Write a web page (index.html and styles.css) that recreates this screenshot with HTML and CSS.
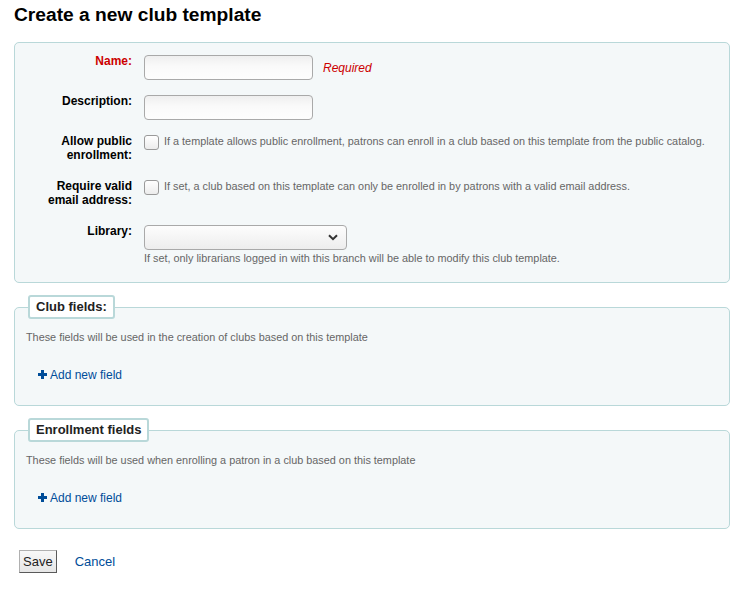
FILE: index.html
```html
<!DOCTYPE html>
<html lang="en">
<head>
<meta charset="utf-8">
<title>Create a new club template</title>
<link rel="stylesheet" href="styles.css">
</head>
<body>
<main class="page">
  <h1 class="title">Create a new club template</h1>
  <form class="form">
    <fieldset class="box box-main">
      <div class="row">
        <label class="lbl lbl-required" for="name">Name:</label>
        <div class="field field-center">
          <input class="text-input" id="name" type="text">
          <span class="required">Required</span>
        </div>
      </div>
      <div class="row">
        <label class="lbl" for="desc">Description:</label>
        <div class="field">
          <input class="text-input" id="desc" type="text">
        </div>
      </div>
      <div class="row row-tall">
        <label class="lbl" for="pub">Allow public enrollment:</label>
        <div class="field">
          <input class="check" id="pub" type="checkbox">
          <span class="hint hint-side">If a template allows public enrollment, patrons can enroll in a club based on this template from the public catalog.</span>
        </div>
      </div>
      <div class="row row-tall">
        <label class="lbl" for="email">Require valid email address:</label>
        <div class="field">
          <input class="check" id="email" type="checkbox">
          <span class="hint hint-side">If set, a club based on this template can only be enrolled in by patrons with a valid email address.</span>
        </div>
      </div>
      <div class="row row-last">
        <label class="lbl" for="lib">Library:</label>
        <div class="field field-column">
          <div class="select-wrap">
            <select class="select" id="lib"><option></option></select>
            <svg class="chevron" width="10" height="7" viewBox="0 0 10 7"><polyline points="1,1.2 5,5.2 9,1.2" fill="none" stroke="#333" stroke-width="2"/></svg>
          </div>
          <span class="hint hint-below">If set, only librarians logged in with this branch will be able to modify this club template.</span>
        </div>
      </div>
    </fieldset>

    <fieldset class="box box-sub">
      <legend class="legend">Club fields:</legend>
      <p class="hint intro">These fields will be used in the creation of clubs based on this template</p>
      <a class="add-link" href="#"><svg class="plus" width="9" height="9" viewBox="0 0 9 9"><rect x="3" y="0" width="3" height="9" fill="#004d99"/><rect x="0" y="3" width="9" height="3" fill="#004d99"/></svg>Add new field</a>
    </fieldset>

    <fieldset class="box box-sub">
      <legend class="legend">Enrollment fields</legend>
      <p class="hint intro">These fields will be used when enrolling a patron in a club based on this template</p>
      <a class="add-link" href="#"><svg class="plus" width="9" height="9" viewBox="0 0 9 9"><rect x="3" y="0" width="3" height="9" fill="#004d99"/><rect x="0" y="3" width="9" height="3" fill="#004d99"/></svg>Add new field</a>
    </fieldset>

    <div class="actions">
      <button class="save" type="button">Save</button>
      <a class="cancel" href="#">Cancel</a>
    </div>
  </form>
</main>
</body>
</html>
```

FILE: styles.css
```css
html, body {
  margin: 0;
  padding: 0;
  background: #fff;
}

body {
  font-family: "Liberation Sans", Arial, sans-serif;
  color: #000;
}

.page {
  padding: 0 0 0 14px;
  width: 716px;
}

.title {
  margin: 4px 0 0 0;
  font-size: 19.2px;
  line-height: 22px;
  font-weight: bold;
  color: #000;
}

.form {
  display: block;
}

.box {
  box-sizing: border-box;
  width: 716px;
  margin: 0;
  min-inline-size: 0;
  border: 1px solid #b9d8d9;
  border-radius: 5px;
  background: #f4f8f9;
}

.box-main {
  margin-top: 16px;
  padding: 11px 15px 17px 15px;
}

.box-sub {
  margin-top: 12px;
  padding: 0 11px 23px 11px;
}

.row {
  display: grid;
  grid-template-columns: 102px 1fr;
  column-gap: 12px;
  padding-bottom: 14px;
}

.row-tall {
  padding-bottom: 17px;
}

.row-last {
  padding-bottom: 0;
}

.lbl {
  font-size: 12px;
  line-height: 14px;
  font-weight: bold;
  text-align: right;
  color: #000;
}

.lbl-required {
  color: #cc0000;
}

.field {
  display: flex;
  align-items: flex-start;
}

.field-center {
  align-items: center;
}

.field-column {
  flex-direction: column;
}

.text-input {
  box-sizing: border-box;
  width: 169px;
  height: 25px;
  margin: 1px 0 0 0;
  padding: 2px 5px;
  border: 1px solid #a9a9a9;
  border-radius: 4px;
  background: linear-gradient(to bottom, #efefef 0%, #fafafa 45%, #fdfdfd 100%);
  font-family: "Liberation Sans", Arial, sans-serif;
  font-size: 12px;
}

.required {
  margin: 1px 0 0 10px;
  font-size: 12px;
  font-style: italic;
  color: #cc0000;
}

.check {
  appearance: none;
  -webkit-appearance: none;
  box-sizing: border-box;
  width: 15px;
  height: 15px;
  margin: 1px 0 0 0;
  border: 1px solid #9a9a9a;
  border-radius: 3px;
  background: linear-gradient(to bottom, #ffffff, #ececec);
  flex: none;
}

.hint {
  font-size: 10.85px;
  line-height: 14px;
  color: #666;
}

.hint-side {
  margin-left: 5px;
}

.hint-below {
  margin-top: 1px;
}

.select-wrap {
  position: relative;
  width: 203px;
  height: 25px;
  margin-top: 1px;
}

.select {
  appearance: none;
  -webkit-appearance: none;
  box-sizing: border-box;
  width: 203px;
  height: 25px;
  margin: 0;
  border: 1px solid #a9a9a9;
  border-radius: 4px;
  background: linear-gradient(to bottom, #fdfdfd, #ededed);
  font-family: "Liberation Sans", Arial, sans-serif;
  font-size: 12px;
}

.chevron {
  position: absolute;
  right: 9px;
  top: 9px;
  pointer-events: none;
}

.legend {
  margin-left: 2px;
  padding: 0 6px;
  border: 2px solid #b9d8d9;
  border-radius: 3px;
  background: #fff;
  font-size: 13px;
  line-height: 20px;
  font-weight: bold;
  color: #222;
}

.intro {
  margin: 11px 0 0 0;
}

.add-link {
  display: flex;
  align-items: center;
  margin: 24px 0 0 12px;
  font-size: 12px;
  line-height: 14px;
  color: #004d99;
  text-decoration: none;
}

.plus {
  margin-right: 3px;
  margin-top: -1px;
}

.actions {
  display: flex;
  align-items: center;
  margin: 21px 0 0 5px;
}

.save {
  box-sizing: border-box;
  height: 23px;
  padding: 0 3px;
  border: 1px solid;
  border-color: #b0b0b0 #5a5a5a #5a5a5a #b0b0b0;
  border-radius: 0;
  background: linear-gradient(to bottom, #f8f8f8, #e6e6e6);
  font-family: "Liberation Sans", Arial, sans-serif;
  font-size: 13px;
  color: #222;
}

.cancel {
  margin-left: 18px;
  font-size: 13px;
  color: #004d99;
  text-decoration: none;
}
```
